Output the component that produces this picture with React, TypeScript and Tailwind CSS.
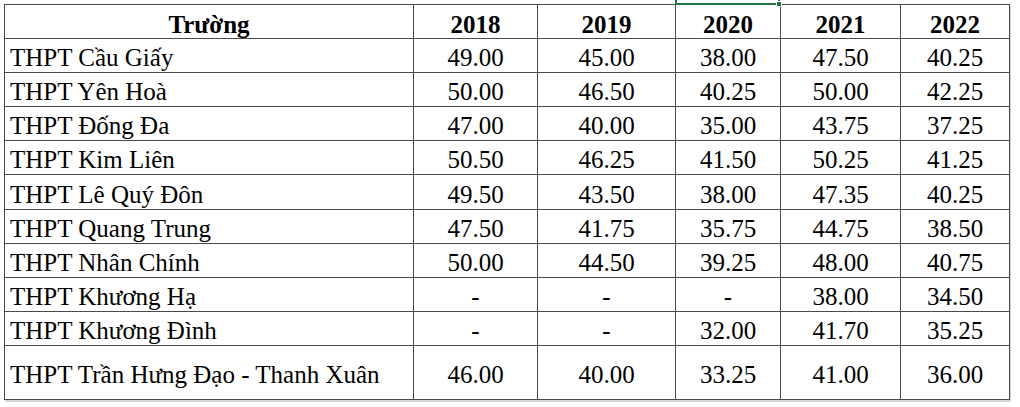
import React from "react";

const rows: { name: string; v: string[]; h: string }[] = [
  { name: "THPT Cầu Giấy", v: ["49.00", "45.00", "38.00", "47.50", "40.25"], h: "h-[34px]" },
  { name: "THPT Yên Hoà", v: ["50.00", "46.50", "40.25", "50.00", "42.25"], h: "h-[34px]" },
  { name: "THPT Đống Đa", v: ["47.00", "40.00", "35.00", "43.75", "37.25"], h: "h-[34px]" },
  { name: "THPT Kim Liên", v: ["50.50", "46.25", "41.50", "50.25", "41.25"], h: "h-[34px]" },
  { name: "THPT Lê Quý Đôn", v: ["49.50", "43.50", "38.00", "47.35", "40.25"], h: "h-[35px]" },
  { name: "THPT Quang Trung", v: ["47.50", "41.75", "35.75", "44.75", "38.50"], h: "h-[34px]" },
  { name: "THPT Nhân Chính", v: ["50.00", "44.50", "39.25", "48.00", "40.75"], h: "h-[34px]" },
  { name: "THPT Khương Hạ", v: ["-", "-", "-", "38.00", "34.50"], h: "h-[34px]" },
  { name: "THPT Khương Đình", v: ["-", "-", "32.00", "41.70", "35.25"], h: "h-[34px]" },
  { name: "THPT Trần Hưng Đạo - Thanh Xuân", v: ["46.00", "40.00", "33.25", "41.00", "36.00"], h: "h-[54px]" },
];

const years = ["2018", "2019", "2020", "2021", "2022"];

export default function App() {
  return (
    <div
      className="relative w-[1020px] h-[407px] bg-white overflow-hidden text-black"
      style={{ fontFamily: '"Liberation Serif", "Times New Roman", serif' }}
    >
      <div className="pl-[4px] pt-[4px]">
        <div className="w-[1006px] border-l border-t border-[#4a4a4a] text-[25px] leading-none shadow-[1px_2px_0_#d6d6d6]">
          <div className="grid grid-cols-[409px_124px_138px_105px_120px_109px] h-[34px]">
            <div className="border-r border-b border-[#4a4a4a] flex items-center justify-center pt-[5px] font-bold">Trường</div>
            {years.map((y) => (
              <div key={y} className="border-r border-b border-[#4a4a4a] flex items-center justify-center pt-[5px] font-bold">
                {y}
              </div>
            ))}
          </div>
          {rows.map((r) => (
            <div key={r.name} className={`grid grid-cols-[409px_124px_138px_105px_120px_109px] ${r.h}`}>
              <div className="border-r border-b border-[#4a4a4a] flex items-center pl-[5px] pt-[4px] whitespace-nowrap">
                {r.name}
              </div>
              {r.v.map((v, i) => (
                <div key={i} className="border-r border-b border-[#4a4a4a] flex items-center justify-center pt-[4px]">
                  {v}
                </div>
              ))}
            </div>
          ))}
        </div>
      </div>

      {/* green selection of the cell above the table (overlay) */}
      <div className="absolute left-[675px] -top-[2px] w-[105px] h-[7px] border-2 border-t-0 border-[#217346]">
        <div className="absolute -right-[4px] -bottom-[4px] w-[6px] h-[6px] bg-[#217346] border border-white" />
      </div>
    </div>
  );
}
